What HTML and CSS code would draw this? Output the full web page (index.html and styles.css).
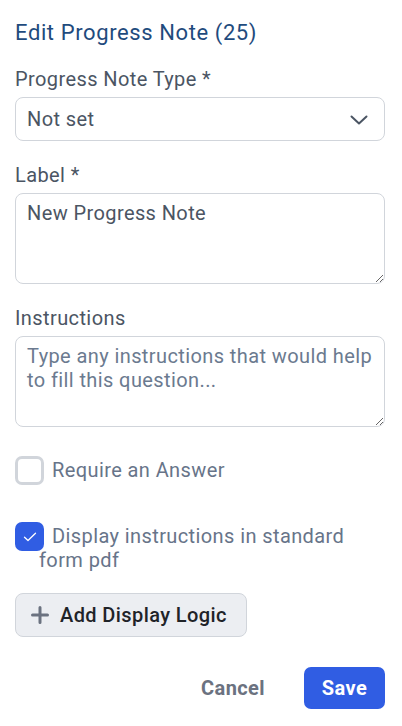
FILE: index.html
```
<!DOCTYPE html>
<html>
<head>
    <title>Edit Progress Note</title>
    <link rel="stylesheet" href="styles.css">
</head>
<body>
    <div class="panel">
        <h2 class="title">Edit Progress Note (25)</h2>

        <div class="field">
            <label class="field-label">Progress Note Type *</label>
            <div class="select">
                <span>Not set</span>
                <svg class="chevron" width="18" height="10" viewBox="0 0 18 10">
                    <path d="M1.5 1.5 L9 8.5 L16.5 1.5" fill="none" stroke="#4b5563" stroke-width="2" stroke-linecap="round" stroke-linejoin="round"/>
                </svg>
            </div>
        </div>

        <div class="field">
            <label class="field-label">Label *</label>
            <textarea class="text-input">New Progress Note</textarea>
        </div>

        <div class="field">
            <label class="field-label">Instructions</label>
            <textarea class="text-input" placeholder="Type any instructions that would help to fill this question..."></textarea>
        </div>

        <div class="check-row first">
            <span class="checkbox"></span>Require an Answer
        </div>

        <div class="check-row second">
            <span class="checkbox checked">
                <svg width="14" height="10" viewBox="0 0 14 10">
                    <path d="M1.5 5.2 L5 8.5 L12.5 1.2" fill="none" stroke="#fff" stroke-width="1.3" stroke-linecap="round" stroke-linejoin="round"/>
                </svg>
            </span>Display instructions in standard form pdf
        </div>

        <button class="logic-button">
            <svg width="18" height="18" viewBox="0 0 18 18">
                <path d="M9 1.5 V16.5 M1.5 9 H16.5" stroke="#6b7280" stroke-width="3" stroke-linecap="round"/>
            </svg>
            Add Display Logic
        </button>

        <div class="actions">
            <button class="cancel-button">Cancel</button>
            <button class="save-button">Save</button>
        </div>
    </div>
</body>
</html>
```

FILE: styles.css
```
body {
    margin: 0;
    background-color: #ffffff;
    font-family: Roboto, 'Liberation Sans', sans-serif;
    letter-spacing: 0.4px;
}

.panel {
    padding: 19px 17px 0 15px;
}

.title {
    margin: 0 0 20px;
    font-size: 22px;
    line-height: 28px;
    font-weight: 400;
    letter-spacing: 0.6px;
    color: #1f4b7d;
}

.field {
    margin-bottom: 22px;
}

.field-label {
    display: block;
    margin-bottom: 6px;
    font-size: 20px;
    line-height: 24px;
    color: #4b5563;
}

.select {
    display: flex;
    justify-content: space-between;
    align-items: center;
    height: 44px;
    box-sizing: border-box;
    padding: 0 16px 0 11px;
    border: 1px solid #d1d5db;
    border-radius: 8px;
    font-size: 20px;
    color: #4b5563;
}

.chevron {
    margin-top: 2px;
}

.text-input {
    display: block;
    width: 100%;
    height: 91px;
    box-sizing: border-box;
    margin: 0;
    padding: 7px 4px 8px 11px;
    border: 1px solid #d1d5db;
    border-radius: 8px;
    font-family: Roboto, 'Liberation Sans', sans-serif;
    font-size: 20px;
    line-height: 24px;
    letter-spacing: 0.4px;
    color: #4b5563;
    background-color: #ffffff;
}

.text-input::placeholder {
    color: #6b7a8f;
}

.check-row {
    padding-left: 24px;
    font-size: 20px;
    line-height: 24px;
    color: #677489;
}

.check-row.first {
    margin-top: 31px;
}

.check-row.second {
    margin-top: 42px;
}

/* floated so the wrapped line falls back under the label padding */
.checkbox {
    float: left;
    display: flex;
    justify-content: center;
    align-items: center;
    width: 29px;
    height: 29px;
    box-sizing: border-box;
    margin: -2px 8px -10px -24px;
    border: 3px solid #d1d5db;
    border-radius: 7px;
}

.checkbox.checked {
    border: none;
    background-color: #305de3;
}

.logic-button {
    display: inline-flex;
    align-items: center;
    gap: 11px;
    height: 44px;
    margin-top: 21px;
    padding: 0 19px 0 15px;
    border: 1px solid #d1d5db;
    border-radius: 8px;
    background-color: #eceef2;
    font-family: Roboto, 'Liberation Sans', sans-serif;
    font-size: 20px;
    font-weight: 500;
    letter-spacing: 0.4px;
    color: #1f2328;
}

.actions {
    display: flex;
    justify-content: flex-end;
    align-items: center;
    gap: 21px;
    margin-top: 30px;
}

.cancel-button {
    padding: 0 18px;
    border: none;
    background: none;
    font-family: Roboto, 'Liberation Sans', sans-serif;
    font-size: 20px;
    font-weight: 700;
    letter-spacing: 0.4px;
    color: #6b7280;
}

.save-button {
    width: 81px;
    height: 42px;
    border: none;
    border-radius: 7px;
    background-color: #305de3;
    font-family: Roboto, 'Liberation Sans', sans-serif;
    font-size: 20px;
    font-weight: 700;
    letter-spacing: 0.4px;
    color: #ffffff;
}
```
